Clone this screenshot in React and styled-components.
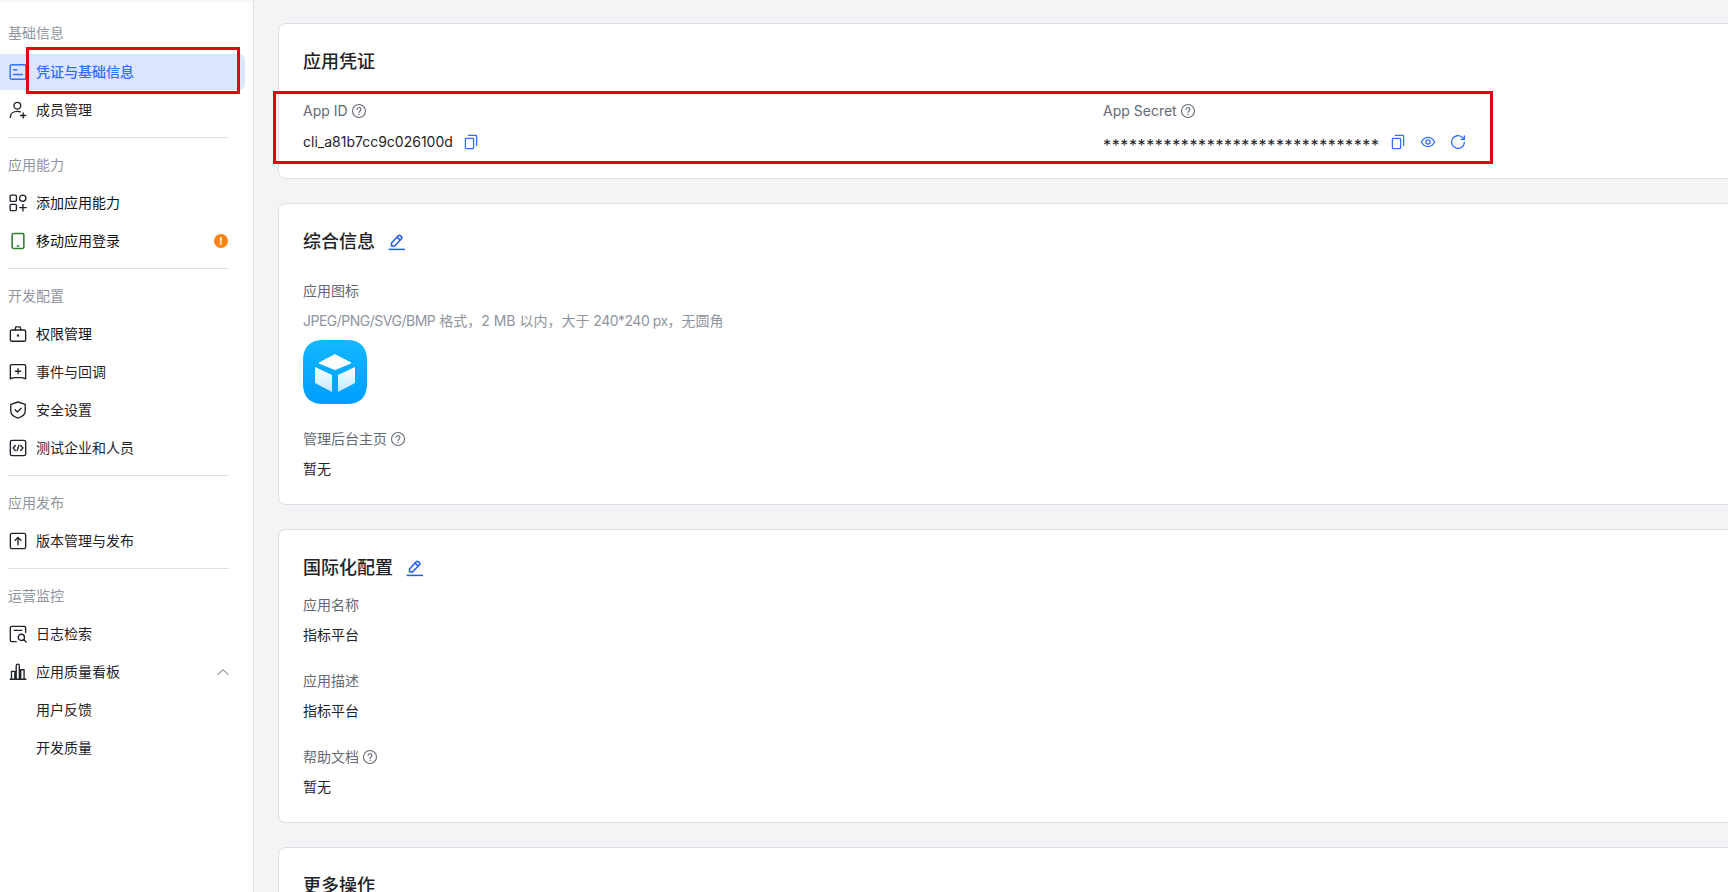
import React from 'react';
import styled, { createGlobalStyle } from 'styled-components';

const Global = createGlobalStyle`
  html, body { margin: 0; padding: 0; height: 100%; overflow: hidden; }
  body { font-family: Inter, "Noto Sans CJK SC", "Noto Sans", sans-serif; background: #f3f4f6; color: #1f2329; }
  #root { height: 100%; }
`;

const Shell = styled.div`
  position: relative;
  display: flex;
  width: 1728px;
  height: 892px;
  overflow: hidden;
`;
const Sidebar = styled.aside`
  flex: 0 0 254px;
  box-sizing: border-box;
  height: 100%;
  background: #fff;
  border-right: 1px solid #dee0e3;
  box-shadow: inset 0 4px 4px -4px rgba(0, 0, 0, 0.1);
  padding-top: 22px;
`;
const GroupTitle = styled.div`
  height: 22px;
  line-height: 22px;
  padding-left: 8px;
  margin-bottom: ${p => (p.$first ? 10 : 9)}px;
  font-size: 14px;
  color: #8f959e;
`;
const NavItem = styled.div`
  display: flex;
  align-items: center;
  box-sizing: border-box;
  width: 245px;
  height: 36px;
  margin-bottom: 2px;
  padding: 0 17px 0 ${p => (p.$sub ? '36px' : '9px')};
  gap: 9px;
  border-radius: 0 6px 6px 0;
  font-size: 14px;
  font-weight: ${p => (p.$active ? 500 : 400)};
  color: ${p => (p.$active ? '#3370ff' : p.$dark ? '#0f1114' : '#1f2329')};
  background: ${p => (p.$active ? '#dbe5fb' : 'transparent')};
  line-height: 22px;
`;
const NavLabel = styled.span`
  flex: 1;
`;
const ChevronSlot = styled.span`
  display: flex;
  margin-right: -3px;
`;
const Divider = styled.hr`
  width: 221px;
  height: 1px;
  border: 0;
  margin: 9px 0 16px 8px;
  background: #dee0e3;
`;
const Main = styled.main`
  flex: 1;
  min-width: 0;
  padding: 23px 0 0 24px;
  display: flex;
  flex-direction: column;
  gap: 24px;
  overflow: hidden;
`;
const Card = styled.section`
  flex: none;
  box-sizing: border-box;
  width: 1640px;
  background: #fff;
  border: 1px solid #dee0e3;
  border-radius: 8px;
  padding: 24px;
`;
const CardHead = styled.div`
  display: flex;
  align-items: center;
  gap: 12px;
  height: 28px;
  margin-bottom: ${p => p.$mb || 24}px;
`;
const CardTitle = styled.h2`
  margin: 0;
  font-size: 18px;
  line-height: 28px;
  font-weight: 500;
  color: #1f2329;
`;
const Columns = styled.div`
  display: grid;
  grid-template-columns: 800px 1fr;
`;
const Field = styled.div`
  margin-bottom: ${p => (p.$last ? 0 : 24)}px;
`;
const Label = styled.div`
  display: flex;
  align-items: center;
  gap: 3px;
  height: 22px;
  font-size: 14px;
  line-height: 22px;
  color: #646a73;
  margin-bottom: 8px;
`;
const Value = styled.div`
  display: flex;
  align-items: center;
  height: ${p => (p.$tall ? 24 : 22)}px;
  font-size: 14px;
  line-height: 22px;
  color: #1f2329;
`;
const Stars = styled.span`
  font-size: 16px;
  line-height: 18px;
  letter-spacing: 0.63px;
  margin-top: 6px;
`;
const Hint = styled.div`
  height: 22px;
  line-height: 22px;
  font-size: 14px;
  color: #8f959e;
  margin-bottom: 8px;
`;
const TightLatin = styled.span`
  letter-spacing: -0.5px;
`;
const Actions = styled.span`
  display: inline-flex;
  align-items: center;
  gap: 14px;
  margin-left: 10px;
`;
const Glyph = styled.svg`
  flex: none;
  display: block;
  width: ${p => p.$size || 18}px;
  height: ${p => p.$size || 18}px;
  fill: none;
  stroke: ${p => p.$color || '#1f2329'};
  stroke-width: ${p => p.$sw || 1.2};
  stroke-linecap: round;
  stroke-linejoin: round;
`;
const Badge = styled.span`
  display: flex;
  align-items: center;
  justify-content: center;
  width: 14px;
  height: 14px;
  border-radius: 50%;
  background: #ff8112;
  color: #fff;
  font-size: 10px;
  line-height: 14px;
  font-weight: 700;
`;
const Mark = styled.div`
  position: absolute;
  box-sizing: border-box;
  border: 3px solid #e60012;
  pointer-events: none;
  left: ${p => p.$x}px;
  top: ${p => p.$y}px;
  width: ${p => p.$w}px;
  height: ${p => p.$h}px;
`;

const I = ({ children, ...p }) => <Glyph viewBox="0 0 16 16" {...p}>{children}</Glyph>;

const Help = () => (
  <I $size={16} $color="#646a73" $sw={1.1}>
    <circle cx="8" cy="8" r="6.5" />
    <path d="M6.1 6.5a1.9 1.9 0 1 1 3 1.5c-.7.5-1.1.8-1.1 1.6" />
    <path d="M8 11.5v.1" strokeWidth="1.4" />
  </I>
);
const Copy = () => (
  <I $size={16} $color="#3370ff" $sw={1.3}>
    <rect x="2.4" y="4.4" width="8.2" height="10.2" rx="0.8" />
    <path d="M5.4 1.4h7.4a.8.8 0 0 1 .8.8v9.4" />
  </I>
);
const Eye = () => (
  <I $size={16} $color="#3370ff" $sw={1.3}>
    <path d="M1.2 8C3 5 5.2 3.4 8 3.4S13 5 14.8 8C13 11 10.8 12.6 8 12.6S3 11 1.2 8Z" />
    <circle cx="8" cy="8" r="2.1" />
  </I>
);
const Refresh = () => (
  <I $size={16} $color="#3370ff" $sw={1.3}>
    <path d="M14.4 8.4A6.4 6.4 0 1 1 12.2 3.2L14.4 5.4" />
    <path d="M14.4 2v3.4H11" />
  </I>
);
const Edit = () => (
  <Glyph viewBox="0 0 18 18" $size={18} $color="#1d5cff" $sw={1.5}>
    <path d="M4.5 10 11.5 2.6a1.2 1.2 0 0 1 1.7 0l1.4 1.3a1.2 1.2 0 0 1 0 1.7L7.6 13H4.5Z" />
    <path d="M10.2 4.2l3 2.9" />
    <path d="M1.6 16.4h16.4" strokeLinecap="butt" />
  </Glyph>
);

const icons = {
  cred: <I $color="#3370ff" $sw={1.3}><rect x="1" y="1.6" width="14" height="12.8" rx="1.6" /><path d="M4 6h3M4 10.2h8" /></I>,
  member: <I><circle cx="7.4" cy="4.2" r="3" /><path d="M1.2 14.6c0-3.4 2.6-5.4 6.2-5.4 1 0 1.8.1 2.6.5" /><path d="M12.6 10.6v4.6M10.3 12.9h4.6" /></I>,
  add: <I><rect x="1" y="1" width="5.6" height="5.6" rx="1" /><circle cx="12.2" cy="3.8" r="2.8" /><rect x="1" y="9.2" width="5.6" height="5.6" rx="1" /><path d="M12.4 9.2v5.8M9.5 12.1h5.8" /></I>,
  phone: <I $color="#2e7d32" $sw={1.4}><rect x="2.8" y="1.4" width="10.4" height="13.2" rx="1.2" /><path d="M7.4 12.4h1.2" /></I>,
  lock: <I><rect x="1.2" y="4.4" width="13.6" height="10" rx="1.4" /><path d="M5.4 4.4 6 1.6h4l.6 2.8" /><path d="M8 9.2v.3" strokeWidth="2" /></I>,
  event: <I><path d="M1.2 2.4a1 1 0 0 1 1-1h11.6a1 1 0 0 1 1 1v11.6l-3.2-1H4.4l-3.2 1Z" /><path d="M8 5v4.6M5.7 7.3h4.6" /></I>,
  shield: <I><path d="M8 .9 14.4 3v6.2c0 3-3.2 5-6.4 6-3.2-1-6.4-3-6.4-6V3Z" /><path d="M5.4 7.8 7.4 9.8l3.4-3.4" /></I>,
  code: <I><rect x="1.2" y="1.2" width="13.6" height="13.6" rx="1.4" /><path d="M5.6 5.8 3.6 8l2 2.2M10.4 5.8l2 2.2-2 2.2M8.8 5.6 7.2 10.4" /></I>,
  upload: <I><rect x="1.2" y="1.2" width="13.6" height="13.6" rx="1.4" /><path d="M8 11.4V5M5.4 7.4 8 4.8l2.6 2.6" /></I>,
  log: <I><path d="M14.8 6.6V2.4a1.2 1.2 0 0 0-1.2-1.2H2.4a1.2 1.2 0 0 0-1.2 1.2v11.2a1.2 1.2 0 0 0 1.2 1.2h4" /><path d="M4.6 4.8h6.8" /><circle cx="11" cy="11" r="2.8" /><path d="M13.2 13.2l2 2" /></I>,
  chart: <I><path d="M1 14.4h14" /><path d="M2.2 14.4V7.4h3v7M6.4 14.4V2.4a1.4 1.4 0 0 1 2.8 0v12M10.4 14.4V6h3v8.4" /></I>,
};
const Chevron = () => (
  <ChevronSlot>
    <I $size={16} $color="#8f959e" $sw={1.2}><path d="M3 10.4 8 5.6l5 4.8" /></I>
  </ChevronSlot>
);

const nav = [
  { title: '基础信息', items: [
    { icon: 'cred', label: '凭证与基础信息', active: true },
    { icon: 'member', label: '成员管理' },
  ] },
  { title: '应用能力', items: [
    { icon: 'add', label: '添加应用能力', dark: true },
    { icon: 'phone', label: '移动应用登录', badge: true, dark: true },
  ] },
  { title: '开发配置', items: [
    { icon: 'lock', label: '权限管理', dark: true },
    { icon: 'event', label: '事件与回调' },
    { icon: 'shield', label: '安全设置' },
    { icon: 'code', label: '测试企业和人员' },
  ] },
  { title: '应用发布', items: [
    { icon: 'upload', label: '版本管理与发布' },
  ] },
  { title: '运营监控', items: [
    { icon: 'log', label: '日志检索' },
    { icon: 'chart', label: '应用质量看板', chevron: true },
    { label: '用户反馈', sub: true },
    { label: '开发质量', sub: true },
  ] },
];

const Logo = () => (
  <svg width="64" height="64" viewBox="0 0 64 64" style={{ display: 'block' }}>
    <defs>
      <linearGradient id="bg" x1="0" y1="0" x2="0" y2="1">
        <stop offset="0" stopColor="#12b8ff" />
        <stop offset="1" stopColor="#009dff" />
      </linearGradient>
      <linearGradient id="face" x1="0" y1="0" x2="0" y2="1">
        <stop offset="0" stopColor="#ffffff" />
        <stop offset="1" stopColor="#bfe8ff" />
      </linearGradient>
    </defs>
    <path d="M20 0H44C57 0 64 7 64 20V44C64 57 57 64 44 64H20C7 64 0 57 0 44V20C0 7 7 0 20 0Z" fill="url(#bg)" />
    <path d="M32 14.6 48 23 32 29.6 16 23Z" fill="#fff" stroke="#fff" strokeLinejoin="round" />
    <path d="M12 27 29 35V52L12 43Z" fill="url(#face)" />
    <path d="M52 27 35 35V52L52 43Z" fill="url(#face)" />
  </svg>
);

export default function App() {
  return (
    <Shell>
      <Global />
      <Sidebar>
        {nav.map((g, gi) => (
          <div key={g.title}>
            <GroupTitle $first={gi === 0}>{g.title}</GroupTitle>
            {g.items.map(it => (
              <NavItem key={it.label} $active={it.active} $sub={it.sub} $dark={it.dark}>
                {it.icon && icons[it.icon]}
                <NavLabel>{it.label}</NavLabel>
                {it.badge && <Badge>!</Badge>}
                {it.chevron && <Chevron />}
              </NavItem>
            ))}
            {gi < nav.length - 1 && <Divider />}
          </div>
        ))}
      </Sidebar>
      <Main>
        <Card>
          <CardHead><CardTitle>应用凭证</CardTitle></CardHead>
          <Columns>
            <div>
              <Label>App ID <Help /></Label>
              <Value $tall>cli_a81b7cc9c026100d<Actions><Copy /></Actions></Value>
            </div>
            <div>
              <Label>App Secret <Help /></Label>
              <Value $tall>
                <Stars>********************************</Stars>
                <Actions><Copy /><Eye /><Refresh /></Actions>
              </Value>
            </div>
          </Columns>
        </Card>
        <Card>
          <CardHead><CardTitle>综合信息</CardTitle><Edit /></CardHead>
          <Field>
            <Label>应用图标</Label>
            <Hint><TightLatin>JPEG/PNG/SVG/BMP</TightLatin> 格式，2 MB 以内，大于 <TightLatin>240*240 px</TightLatin>，无圆角</Hint>
            <Logo />
          </Field>
          <Field $last>
            <Label>管理后台主页 <Help /></Label>
            <Value>暂无</Value>
          </Field>
        </Card>
        <Card>
          <CardHead $mb={12}><CardTitle>国际化配置</CardTitle><Edit /></CardHead>
          <Field>
            <Label>应用名称</Label>
            <Value>指标平台</Value>
          </Field>
          <Field>
            <Label>应用描述</Label>
            <Value>指标平台</Value>
          </Field>
          <Field $last>
            <Label>帮助文档 <Help /></Label>
            <Value>暂无</Value>
          </Field>
        </Card>
        <Card>
          <CardHead><CardTitle>更多操作</CardTitle></CardHead>
        </Card>
      </Main>
      <Mark $x={26} $y={47} $w={214} $h={47} />
      <Mark $x={273} $y={91} $w={1220} $h={73} />
    </Shell>
  );
}
